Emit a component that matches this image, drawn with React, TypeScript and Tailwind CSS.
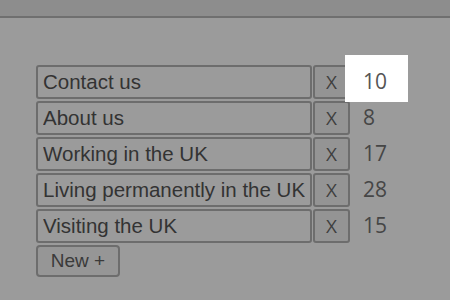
import React from "react";

const pages = [
  { title: "Contact us", count: 10 },
  { title: "About us", count: 8 },
  { title: "Working in the UK", count: 17 },
  { title: "Living permanently in the UK", count: 28 },
  { title: "Visiting the UK", count: 15 },
];

export default function App() {
  return (
    <div className="relative w-[450px] h-[300px] overflow-hidden bg-[#9b9b9b]">
      <div className="h-[18px] bg-[#8d8d8d] border-b-2 border-[#6f6f6f]" />

      {/* highlighted count, sits above the dimmed page */}
      <div className="absolute left-[345px] top-[55px] w-[63px] h-[47px] bg-white z-10" />

      <div className="pl-[36px] pt-[47px] flex flex-col gap-[2px]">
        {pages.map((page, i) => (
          <div key={page.title} className="flex items-center h-[34px]">
            <input
              readOnly
              value={page.title}
              className="w-[276px] h-[34px] px-[5px] bg-[#9b9b9b] border-2 border-[#6d6d6d] rounded-[3px] text-[20.5px] text-[#333333] outline-none font-[family-name:'Liberation_Sans',Arial,sans-serif]"
            />
            <button
              type="button"
              className="ml-[1px] w-[37px] h-[34px] bg-[#949494] border-2 border-[#6d6d6d] rounded-[3px] text-[19px] text-[#3f3f3f] font-[family-name:'Open_Sans',sans-serif] leading-none"
            >
              X
            </button>
            <span
              className={
                "relative ml-[13px] text-[21px] font-[family-name:'Open_Sans',sans-serif] " +
                (i === 0 ? "z-20 text-[#555555]" : "text-[#464646]")
              }
            >
              {page.count}
            </span>
          </div>
        ))}
        <div>
          <button
            type="button"
            className="w-[84px] h-[32px] bg-[#969696] border-2 border-[#6d6d6d] rounded-[4px] text-[19px] text-[#3a3a3a] font-[family-name:'Liberation_Sans',Arial,sans-serif]"
          >
            New +
          </button>
        </div>
      </div>
    </div>
  );
}
